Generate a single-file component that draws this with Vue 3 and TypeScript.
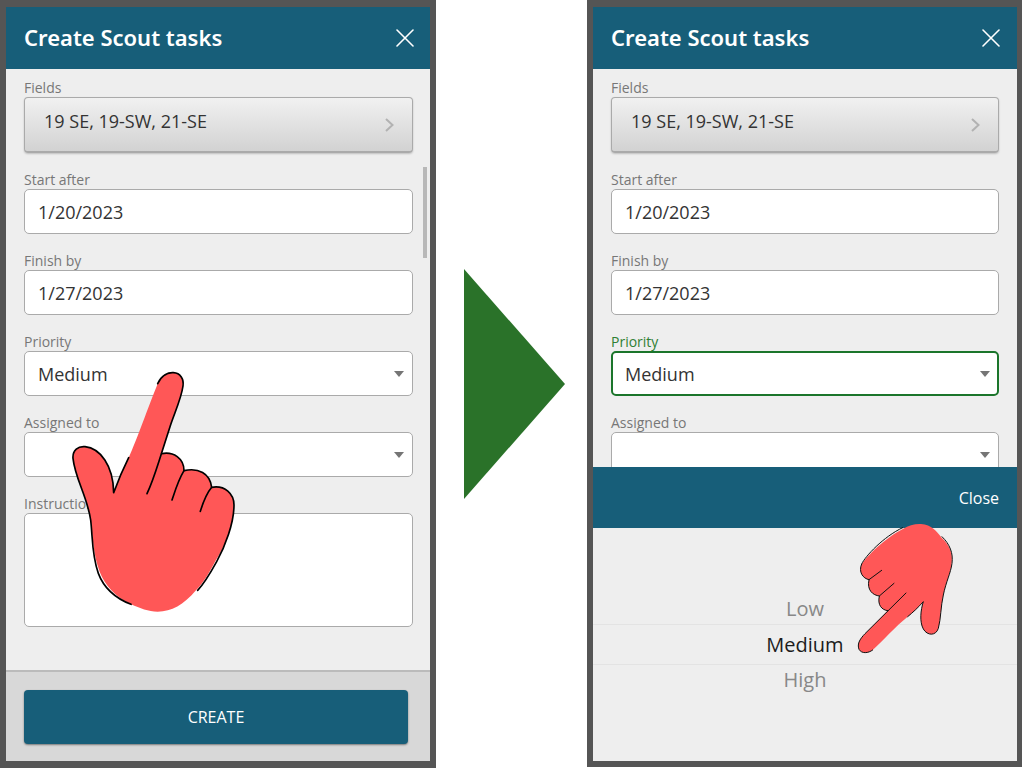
<script setup lang="ts">
import { ref } from 'vue'

interface Screen {
  id: string
  picking: boolean
}

const screens: Screen[] = [
  { id: 'form', picking: false },
  { id: 'picker', picking: true },
]
const priorities: string[] = ['Low', 'Medium', 'High']
const priority = ref<string>('Medium')
const startAfter = ref<string>('1/20/2023')
const finishBy = ref<string>('1/27/2023')
</script>

<template>
  <main class="page">
    <template v-for="screen in screens" :key="screen.id">
      <div v-if="screen.picking" class="step">
        <svg class="arrow" viewBox="0 0 101 230" aria-hidden="true"><path d="M0 0L101 115L0 230Z" fill="#2a7229" /></svg>
      </div>

      <section class="phone" :class="{ 'phone-picking': screen.picking }">
        <header class="bar">
          <h1 class="title">Create Scout tasks</h1>
          <button class="dismiss" type="button" aria-label="Dismiss">
            <svg class="cross" viewBox="0 0 18 18" aria-hidden="true"><path d="M1 1L17 17M17 1L1 17" fill="none" stroke="#fff" stroke-width="1.6" stroke-linecap="round" /></svg>
          </button>
        </header>

        <form class="body" @submit.prevent>
          <div class="field">
            <label class="label" :for="screen.id + '-fields'">Fields</label>
            <button :id="screen.id + '-fields'" class="chooser" type="button">
              <span class="chosen">19 SE, 19-SW, 21-SE</span>
              <svg class="chevron" viewBox="0 0 9 14" aria-hidden="true"><path d="M1 1L7.5 7L1 13" fill="none" stroke="#b2b2b2" stroke-width="2" /></svg>
            </button>
          </div>
          <div class="field">
            <label class="label" :for="screen.id + '-start'">Start after</label>
            <input :id="screen.id + '-start'" v-model="startAfter" class="control" type="text" />
          </div>
          <div class="field">
            <label class="label" :for="screen.id + '-finish'">Finish by</label>
            <input :id="screen.id + '-finish'" v-model="finishBy" class="control" type="text" />
          </div>
          <div class="field" :class="{ active: screen.picking }">
            <label class="label" :for="screen.id + '-priority'">Priority</label>
            <div class="drop">
              <select :id="screen.id + '-priority'" v-model="priority" class="control">
                <option v-for="p in priorities" :key="p">{{ p }}</option>
              </select>
              <svg class="caret" viewBox="0 0 10 6" aria-hidden="true"><path d="M0 0H10L5 6Z" fill="#757575" /></svg>
            </div>
          </div>
          <div class="field">
            <label class="label" :for="screen.id + '-assigned'">Assigned to</label>
            <div class="drop">
              <select :id="screen.id + '-assigned'" class="control"><option></option></select>
              <svg class="caret" viewBox="0 0 10 6" aria-hidden="true"><path d="M0 0H10L5 6Z" fill="#757575" /></svg>
            </div>
          </div>
          <div v-if="!screen.picking" class="field">
            <label class="label" :for="screen.id + '-notes'">Instructions</label>
            <textarea :id="screen.id + '-notes'" class="control notes"></textarea>
          </div>
          <div v-if="!screen.picking" class="thumb"></div>
        </form>

        <footer v-if="!screen.picking" class="actions">
          <button class="create" type="button">CREATE</button>
        </footer>

        <div v-if="screen.picking" class="sheet">
          <div class="sheet-bar"><button class="close" type="button">Close</button></div>
          <div class="wheel" role="listbox" aria-label="Priority">
            <button
              v-for="p in priorities"
              :key="p"
              class="choice"
              :class="{ selected: p === priority }"
              type="button"
              role="option"
              :aria-selected="p === priority"
              @click="priority = p"
            >{{ p }}</button>
          </div>
        </div>

        <svg v-if="!screen.picking" class="hand hand-large" viewBox="0 0 660 870" aria-hidden="true">
          <path fill="#ff5757" d="M323 101C335 75 355 67 370 68C392 69 402 88 399 108C394 145 375 185 360 230L335 311C370 304 402 325 402 362C445 352 480 370 485 412C525 405 552 432 552 465C552 520 525 590 498 630C474 675 460 698 438 721C400 765 365 785 323 785C295 785 270 775 243 763C195 740 165 705 149 665C130 615 128 560 122 510C112 440 75 385 69 325C67 300 85 288 105 290C150 295 190 345 191 428C205 390 220 355 236 323C260 270 295 170 323 101Z" />
          <g fill="none" stroke="#000" stroke-width="5" stroke-linecap="round" stroke-linejoin="round">
            <path d="M323 101C335 75 355 67 370 68C392 69 402 88 399 108C394 145 375 185 360 230C348 268 340 292 332 318C320 355 308 395 291 431" />
            <path d="M335 311C370 304 402 325 402 362C385 390 376 420 366 450" />
            <path d="M402 362C445 352 480 370 485 412C470 430 460 455 451 484" />
            <path d="M485 412C525 405 552 432 552 465C552 520 525 590 500 635C478 675 465 698 443 721" />
            <path d="M243 763C190 742 160 710 145 670C125 615 128 560 122 510C112 440 75 385 69 325C67 300 85 288 105 290C150 295 190 345 191 428C205 390 220 355 236 323" />
          </g>
        </svg>
        <svg v-else class="hand hand-small" viewBox="0 0 552 480" aria-hidden="true">
          <path fill="#ff5757" d="M98 420C85 430 65 432 57 418C50 400 62 385 75 371L143 302C125 300 112 285 118 258C98 256 80 240 87 209C68 206 55 185 65 162C78 142 132 85 190 56C205 46 225 41 243 42C275 43 290 65 305 83C329 105 339 130 335 160C332 190 318 215 310 255C302 290 303 325 295 355C288 378 262 378 250 357C238 335 242 300 250 275C235 292 220 306 203 320C165 350 130 391 98 420Z" />
          <g fill="none" stroke="#111" stroke-width="3" stroke-linecap="round" stroke-linejoin="round">
            <path d="M98 420C85 430 65 432 57 418C50 400 62 385 75 371L198 249" />
            <path d="M143 302C125 300 112 285 118 258L162 220" />
            <path d="M118 258C98 256 80 240 87 209L125 181" />
            <path d="M87 209C68 206 55 185 65 162C75 140 130 80 188 53" />
            <path d="M306 80C330 103 340 130 336 160C332 190 318 215 310 255C302 290 303 325 295 355C288 378 262 378 250 357C238 335 242 300 250 275C235 292 220 306 203 320" />
          </g>
        </svg>
      </section>
    </template>
  </main>
</template>

<style>
body {
  margin: 0;
  background: #fff;
}
</style>

<style scoped>
.page {
  display: grid;
  grid-template-columns: 436fr 151fr 435fr;
  box-sizing: border-box;
  height: 100vh;
  padding-right: 2px;
  font-family: "Open Sans", "Noto Sans", sans-serif;
  color: #333;
}
.page * {
  box-sizing: border-box;
}
button,
input,
select,
textarea {
  margin: 0;
  font-family: inherit;
  color: inherit;
}
button {
  padding: 0;
  border: 0;
  background: none;
  cursor: pointer;
}
.step {
  display: flex;
  align-items: center;
  padding: 0 22px 0 28px;
}
.arrow {
  display: block;
  width: 100%;
}
.phone {
  position: relative;
  display: flex;
  flex-direction: column;
  min-width: 0;
  min-height: 0;
  border: 6px solid #555;
  border-width: 7px 6px;
  background: #eee;
}
.phone-picking {
  border-width: 7px 5px 6px 6px;
  margin-bottom: 1px;
}
.bar {
  display: flex;
  flex: none;
  align-items: center;
  justify-content: space-between;
  height: 62px;
  padding: 0 16px 0 18px;
  background: #175e79;
  color: #fff;
}
.phone-picking .bar {
  padding-right: 17px;
}
.title {
  margin: 0;
  padding-bottom: 2px;
  font-family: "Noto Sans", "Open Sans", sans-serif;
  font-size: 22px;
  font-weight: 600;
  line-height: 28px;
}
.dismiss {
  display: flex;
}
.cross {
  width: 18px;
  height: 18px;
}
.body {
  position: relative;
  display: flex;
  flex: 1 1 0;
  flex-direction: column;
  gap: 16px;
  min-height: 0;
  padding: 8px 17px 0 18px;
  overflow: hidden;
}
.phone-picking .body {
  padding-right: 18px;
}
.field {
  display: flex;
  flex: none;
  flex-direction: column;
}
.label {
  padding-top: 2px;
  font-size: 14px;
  line-height: 18px;
  color: #777;
}
.chooser {
  display: flex;
  align-items: center;
  justify-content: space-between;
  height: 56px;
  padding: 0 18px 0 19px;
  border: 1px solid #aaa;
  border-bottom-width: 2px;
  border-radius: 4px;
  background: linear-gradient(#f1f1f1, #d2d2d2);
  box-shadow: 0 1px 2px rgba(0, 0, 0, 0.2);
}
.chosen {
  padding-bottom: 8px;
  font-size: 18px;
  line-height: 24px;
}
.chevron {
  width: 9px;
  height: 14px;
}
.control {
  display: block;
  width: 100%;
  height: 45px;
  padding: 0 13px;
  border: 1px solid #aaa;
  border-radius: 5px;
  outline: 0;
  background: #fff;
  font-size: 18px;
  line-height: 24px;
  appearance: none;
}
.notes {
  height: 114px;
  padding: 10px 13px;
  resize: none;
}
.drop {
  position: relative;
}
.caret {
  position: absolute;
  top: 20px;
  right: 9px;
  width: 10px;
  height: 6px;
  pointer-events: none;
}
.active .label {
  color: #2e8033;
}
.active .control {
  padding: 0 12px;
  border: 2px solid #1b752b;
}
.thumb {
  position: absolute;
  top: 98px;
  right: 3px;
  width: 4px;
  height: 91px;
  background: #b8b8b8;
}
.actions {
  flex: none;
  padding: 18px 22px 17px 18px;
  border-top: 2px solid #bbb;
  background: #d8d8d8;
}
.create {
  display: block;
  width: 100%;
  height: 54px;
  border-radius: 4px;
  background: #175e79;
  box-shadow: 0 1px 2px rgba(0, 0, 0, 0.45);
  color: #fff;
  font-size: 16px;
}
.sheet {
  flex: none;
}
.sheet-bar {
  display: flex;
  align-items: center;
  justify-content: flex-end;
  height: 61px;
  padding: 0 18px;
  background: #175e79;
  color: #fff;
}
.close {
  font-size: 16px;
  line-height: 24px;
}
.wheel {
  display: flex;
  flex-direction: column;
  justify-content: center;
  height: 233px;
}
.choice {
  height: 30px;
  color: #888;
  font-size: 20px;
  line-height: 30px;
}
.selected {
  height: 41px;
  border: solid #e3e3e3;
  border-width: 1px 0;
  color: #1c1c1c;
}
.hand {
  position: absolute;
  pointer-events: none;
}
.hand-large {
  top: 343px;
  left: 44px;
  width: 220px;
  height: 290px;
}
.hand-small {
  top: 503px;
  right: -7px;
  width: 184px;
  height: 160px;
}
</style>
